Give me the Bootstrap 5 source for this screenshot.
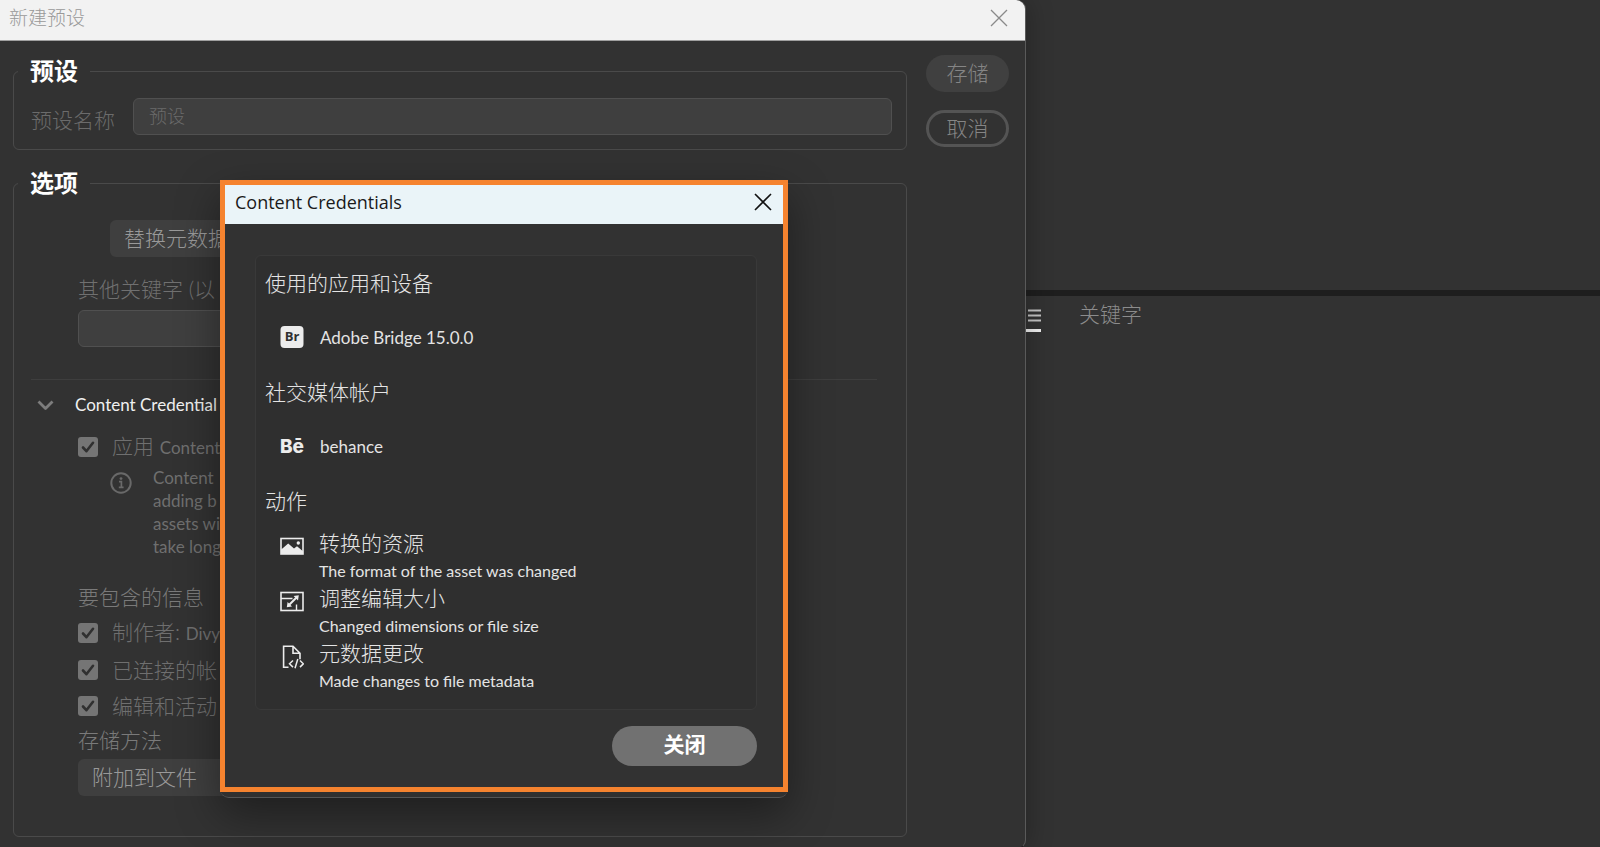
<!DOCTYPE html>
<html lang="zh-CN">
<head>
<meta charset="utf-8">
<meta name="viewport" content="width=device-width, initial-scale=1">
<title>新建预设</title>
<link href="https://cdn.jsdelivr.net/npm/bootstrap@5.3.0/dist/css/bootstrap.min.css" rel="stylesheet">
<style>
  body { background: #323232; color: #7a7a7a; font-family: Lato, "Noto Sans CJK SC", sans-serif; font-size: 21px; line-height: 26px; font-weight: 300; }
  .latin { font-size: 17px; font-weight: 400; }

  .preset-window { width: 64.125%; background: #323232; border-right: 1px solid #5a5a5a; border-bottom: 1px solid #241d21; border-radius: 0 9px 9px 0; box-shadow: 4px 0 24px rgba(0,0,0,.22); z-index: 1; }
  .window-bar { height: 41px; background: #f2f2f2; border-bottom: 1px solid #a0a0a0; border-top-right-radius: 9px; color: #999; padding: 0 17px 5px 9px; }
  .window-bar h1 { font-size: 19px; font-weight: 300; line-height: 26px; }
  .plain-btn { background: none; border: 0; padding: 0; line-height: 0; }
  .window-body { padding: 16px 16px 11px 13px; gap: 19px; }

  .group { border: 1px solid #4a4a4a; border-radius: 6px; padding: 0 14px 14px 17px; }
  .group + .group { margin-top: 19px; }
  .group > legend { float: none; width: auto; margin: 0 0 0 -13px; padding: 0 12px; color: #fff; font-size: 24px; line-height: 28px; font-weight: 700; }
  .name-row { padding-top: 13px; }
  .name-row label { flex: 0 0 102px; padding-top: 9px; color: #6b6b6b; }
  .dark-field { height: 37px; background: #3f3f3f; border: 1px solid #505050; border-radius: 6px; color: #7a7a7a; font-size: 18px; font-weight: 300; padding: 0 15px 2px; }
  .dark-field::placeholder { color: #6b6b6b; opacity: 1; }
  .dark-select { height: 37px; background: #3f3f3f; border: 0; border-radius: 6px; color: #999; font-size: 21px; font-weight: 300; line-height: 26px; padding: 0 10px 3px; width: 480px; }
  .side-actions { width: 83px; gap: 18px; margin-top: -2px; }
  .pill { height: 37px; border-radius: 19px; padding: 0 0 2px; color: #858585; font-size: 21px; font-weight: 300; line-height: 26px; }
  .pill-solid, .pill-solid:disabled { background: #404040; border: 0; color: #858585; opacity: 1; }
  .pill-line { border: 3px solid #545454; line-height: 24px; }

  .options { padding-bottom: 26px; }
  .options .indent { margin-left: 47px; }
  .options hr { margin: 32px 15px 12px 0; border-top: 1px solid #3e3e3e; opacity: 1; }
  .replace { margin: 23px 0 19px 32px; }
  .keyword-label { color: #707070; margin-bottom: 8px; white-space: nowrap; }
  .keyword-field { width: 480px; }
  .section-title { color: #f0f0f0; gap: 21px; padding-left: 6px; }
  .apply-row { margin-top: 15px; }
  .include-list { gap: 10px; margin: 9px 0 8px; }
  .check-row { gap: 14px; white-space: nowrap; color: #6f6f6f; }
  .check-row .form-check-input[type=checkbox] { width: 20px; height: 20px; margin: 0; border: 0; border-radius: 3px; }
  .check-row .form-check-input:checked[type=checkbox] { background-color: #757575; background-size: 20px; background-image: url("data:image/svg+xml,%3Csvg xmlns='http://www.w3.org/2000/svg' viewBox='0 0 20 20'%3E%3Cpath d='M5 10.5l3.4 3.7L15 5.8' fill='none' stroke='%23303030' stroke-width='2.6' stroke-linecap='round' stroke-linejoin='round'/%3E%3C/svg%3E"); }
  .note { gap: 21px; margin: 5px 0 26px 32px; line-height: 23px; color: #6f6f6f; white-space: nowrap; }
  .store-label { margin-bottom: 6px; }

  .panel-top { height: 290px; }
  .panel-bottom { border-top: 6px solid #1e1e1e; padding-top: 5px; gap: 38px; color: #8c8c8c; }
  .menu-tab { border-bottom: 3px solid #eee; width: 15px; height: 31px; }

  .cc-dialog { left: 220px; top: 180px; width: 568px; z-index: 5; padding-bottom: 5px; border-radius: 0 0 9px 9px; background: #303030; border-bottom: 1px solid #555; box-shadow: 0 16px 44px rgba(0,0,0,.4); }
  .cc-frame { border: 5px solid #f5832f; background: #323232; }
  .cc-bar { height: 39px; background: #eaf4f8; color: #1a1a1a; padding: 0 11px 6px 10px; }
  .cc-bar h2 { font: 400 18px/26px "Open Sans", sans-serif; }
  .cc-body { padding: 31px 26px 21px 30px; }
  .cc-panel { background: #2f2f2f; border: 1px solid #393939; border-radius: 6px; padding: 14px 9px; color: #e4e4e4; }
  .cc-panel h3 { font-size: 21px; line-height: 26px; font-weight: 300; margin: 0; }
  .cc-item { gap: 16px; padding: 29px 0 28px 15px; }
  .cc-item svg, .cc-action svg { flex: none; }
  .cc-panel .actions-title { margin-bottom: 16px; }
  .cc-action { gap: 15px; padding-left: 15px; }
  .cc-action svg { margin-top: 5px; }
  .cc-action .act { line-height: 26px; }
  .cc-action .detail { font-size: 16px; line-height: 29px; font-weight: 400; }
  .close-pill { width: 145px; height: 40px; border-radius: 20px; background: #717171; color: #fff; font-size: 21px; font-weight: 700; padding: 0 0 4px; margin-top: 16px; }
</style>
</head>
<body>
<div class="d-flex min-vh-100 position-relative overflow-hidden">
  <main class="preset-window flex-shrink-0 position-relative">
    <header class="window-bar d-flex align-items-center justify-content-between">
      <h1 class="m-0">新建预设</h1>
      <button class="plain-btn" type="button" aria-label="关闭窗口"><svg width="18" height="18" viewBox="0 0 18 18"><path d="M1 1l16 16M17 1L1 17" stroke="#8a8a8a" stroke-width="1.3"/></svg></button>
    </header>

    <div class="window-body d-flex">
      <form class="flex-grow-1">
        <fieldset class="group">
          <legend>预设</legend>
          <div class="name-row d-flex">
            <label for="presetName">预设名称</label>
            <input id="presetName" class="form-control dark-field" type="text" placeholder="预设">
          </div>
        </fieldset>

        <fieldset class="group">
          <legend>选项</legend>
          <div class="options">
            <div class="indent">
              <select class="dark-select d-block replace" aria-label="元数据操作"><option>替换元数据</option></select>
              <label class="keyword-label d-block" for="keywords">其他关键字 (以</label>
              <input id="keywords" class="form-control dark-field keyword-field" type="text">
            </div>
            <hr>
            <div class="section-title d-flex align-items-center">
              <svg width="17" height="10" viewBox="0 0 17 10"><path d="M1.5 1.5l7 7 7-7" fill="none" stroke="#7d7d7d" stroke-width="2.8" stroke-linejoin="round"/></svg>
              <span class="latin">Content Credential</span>
            </div>
            <div class="indent">
              <label class="check-row apply-row d-flex align-items-center"><input class="form-check-input" type="checkbox" checked><span>应用 <span class="latin">Content</span></span></label>
              <div class="note latin d-flex">
                <svg class="mt-1" width="22" height="26" viewBox="0 0 22 26"><circle cx="11" cy="13" r="9.7" fill="none" stroke="#696969" stroke-width="2"/><circle cx="11" cy="8.6" r="1.4" fill="#696969"/><path d="M9 11.6h2.4v5.6M8.8 17.4h4.8" fill="none" stroke="#696969" stroke-width="1.7"/></svg>
                <span>Content<br>adding b<br>assets wi<br>take long</span>
              </div>
              <div>要包含的信息</div>
              <div class="d-grid include-list">
                <label class="check-row d-flex align-items-center"><input class="form-check-input" type="checkbox" checked><span>制作者: <span class="latin">Divy</span></span></label>
                <label class="check-row d-flex align-items-center"><input class="form-check-input" type="checkbox" checked><span>已连接的帐</span></label>
                <label class="check-row d-flex align-items-center"><input class="form-check-input" type="checkbox" checked><span>编辑和活动</span></label>
              </div>
              <label class="store-label d-block" for="storeMethod">存储方法</label>
              <select id="storeMethod" class="dark-select d-block"><option>附加到文件</option></select>
            </div>
          </div>
        </fieldset>
      </form>
      <div class="side-actions d-flex flex-column flex-shrink-0">
        <button class="btn pill pill-solid" type="button" disabled>存储</button>
        <button class="btn pill pill-line" type="button">取消</button>
      </div>
    </div>
  </main>

  <aside class="flex-grow-1">
    <div class="panel-top"></div>
    <div class="panel-bottom d-flex">
      <button class="plain-btn menu-tab d-flex align-items-center justify-content-end" type="button" aria-label="面板菜单"><svg width="13" height="13" viewBox="0 0 13 13"><path d="M0 1.5h13M0 6.5h13M0 11.5h13" stroke="#c4c4c4" stroke-width="2"/></svg></button>
      <span>关键字</span>
    </div>
  </aside>

  <section class="cc-dialog position-absolute" role="dialog" aria-labelledby="ccTitle">
    <div class="cc-frame">
      <header class="cc-bar d-flex align-items-center justify-content-between">
        <h2 id="ccTitle" class="m-0">Content Credentials</h2>
        <button class="plain-btn" type="button" aria-label="关闭对话框"><svg width="18" height="18" viewBox="0 0 18 18"><path d="M1 1l16 16M17 1L1 17" stroke="#111" stroke-width="1.6"/></svg></button>
      </header>
      <div class="cc-body">
        <div class="cc-panel">
          <h3>使用的应用和设备</h3>
          <div class="cc-item d-flex align-items-center">
            <svg width="24" height="26" viewBox="0 0 24 26"><rect x=".5" y="1" width="23" height="22" rx="4" fill="#ececec"/><text x="12" y="16" text-anchor="middle" font-family="Open Sans" font-weight="700" font-size="13" fill="#2f2f2f">Br</text></svg>
            <span class="latin">Adobe Bridge 15.0.0</span>
          </div>
          <h3>社交媒体帐户</h3>
          <div class="cc-item d-flex align-items-center">
            <svg width="24" height="26" viewBox="0 0 24 26"><text x="12" y="19" text-anchor="middle" font-family="Inter" font-weight="800" font-size="19" fill="#ececec">Bē</text></svg>
            <span class="latin">behance</span>
          </div>
          <h3 class="actions-title">动作</h3>
          <div class="cc-action d-flex">
            <svg width="24" height="24" viewBox="0 0 24 24"><rect x="1" y="3.5" width="22" height="15.5" fill="none" stroke="#ececec" stroke-width="1.6"/><path d="M1 14.5l2-1.5 5.2-4.5 5.8 5 3-2.2 6 5V19H1z" fill="#ececec"/><circle cx="18.3" cy="8" r="1.7" fill="#ececec"/></svg>
            <div><div class="act">转换的资源</div><div class="detail">The format of the asset was changed</div></div>
          </div>
          <div class="cc-action d-flex">
            <svg width="24" height="24" viewBox="0 0 24 24" fill="none" stroke="#ececec"><rect x="1" y="2.5" width="22" height="18" stroke-width="1.6"/><path d="M1 8.5h11.5M16.5 20.5v-6" stroke-width="1.4"/><path d="M9 15l7.5-7.5" stroke-width="1.9"/><path d="M18.8 5.2l-.8 5.2-4.4-4.4zM6.8 17.2l.8-5.2 4.4 4.4z" fill="#ececec" stroke="none"/></svg>
            <div><div class="act">调整编辑大小</div><div class="detail">Changed dimensions or file size</div></div>
          </div>
          <div class="cc-action d-flex">
            <svg width="24" height="24" viewBox="0 0 24 24" fill="none" stroke="#ececec"><path d="M8.5 22.3H3.6V1.3h9.4l7 7v6M13 1.3v7h7" stroke-width="1.6"/><path d="M13 15.5l-3.5 3.3 3.5 3.3M20 15.5l3.3 3.3-3.3 3.3M17.8 14l-2.8 9.3" stroke-width="1.5"/></svg>
            <div><div class="act">元数据更改</div><div class="detail">Made changes to file metadata</div></div>
          </div>
        </div>
        <button class="btn close-pill d-block ms-auto" type="button">关闭</button>
      </div>
    </div>
  </section>
</div>
<script src="https://cdn.jsdelivr.net/npm/bootstrap@5.3.0/dist/js/bootstrap.bundle.min.js"></script>
</body>
</html>
